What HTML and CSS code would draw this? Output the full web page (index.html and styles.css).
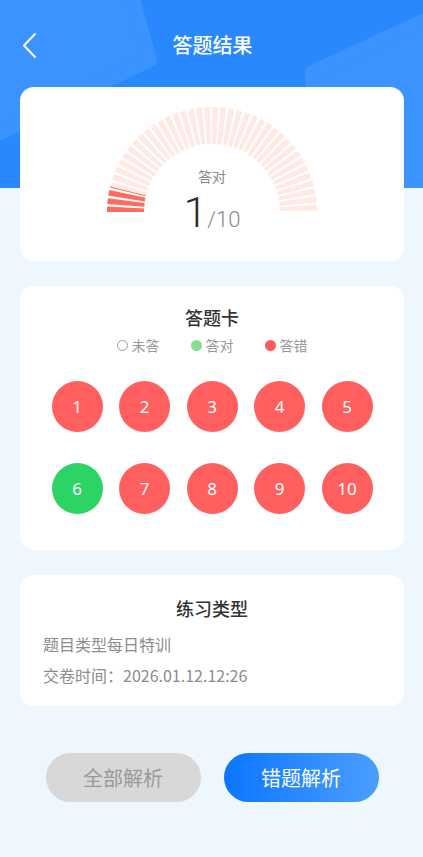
FILE: index.html
```html
<!DOCTYPE html>
<html lang="zh-CN">
    <head>
        <meta charset="utf-8">
        <title>答题结果</title>
        <link rel="stylesheet" href="styles.css">
    </head>
    <body>
        <div class="page">
            <!-- blue band behind the top of the page -->
            <svg class="band" width="423" height="188" viewBox="0 0 423 188">
                <rect width="423" height="188" fill="#2a88ff"/>
                <polygon points="122,-40 150,60 -55,160 -200,-40" fill="#3a93ff" stroke="#3a93ff" stroke-width="14" stroke-linejoin="round"/>
                <polygon points="312,72 460,4 460,200 318,200" fill="#3a93ff" stroke="#3a93ff" stroke-width="14" stroke-linejoin="round"/>
            </svg>

            <header class="nav">
                <svg class="back" width="16" height="26" viewBox="0 0 16 26">
                    <path d="M13 2 L2 13.5 L13 25" fill="none" stroke="#fff" stroke-width="2" stroke-linecap="round" stroke-linejoin="round"/>
                </svg>
                <h1 class="nav-title">答题结果</h1>
                <span></span>
            </header>

            <section class="card score">
                <div class="gauge">
                    <svg width="220" height="120" viewBox="0 0 220 120">
                        <path d="M23.5 106 A86.5 86.5 0 0 1 196.5 106" fill="none" stroke="#fee9e3" stroke-width="37" stroke-dasharray="4.7 2.1"/>
                        <path d="M23.5 106 A86.5 86.5 0 0 1 196.5 106" fill="none" stroke="#ff6b5e" stroke-width="37" stroke-dasharray="4.7 2.1 4.7 2.1 4.7 2.1 0.8 1000"/>
                    </svg>
                    <div class="gauge-label">答对</div>
                    <div class="gauge-value"><span class="got">1</span><span class="total">/10</span></div>
                </div>
            </section>

            <section class="card sheet">
                <h2 class="card-title">答题卡</h2>
                <div class="legend">
                    <span class="legend-item"><i class="dot dot-empty"></i>未答</span>
                    <span class="legend-item"><i class="dot dot-right"></i>答对</span>
                    <span class="legend-item"><i class="dot dot-wrong"></i>答错</span>
                </div>
                <div class="answers">
                    <span class="ball wrong">1</span>
                    <span class="ball wrong">2</span>
                    <span class="ball wrong">3</span>
                    <span class="ball wrong">4</span>
                    <span class="ball wrong">5</span>
                    <span class="ball right">6</span>
                    <span class="ball wrong">7</span>
                    <span class="ball wrong">8</span>
                    <span class="ball wrong">9</span>
                    <span class="ball wrong">10</span>
                </div>
            </section>

            <section class="card info">
                <h2 class="card-title">练习类型</h2>
                <p class="info-line">题目类型每日特训</p>
                <p class="info-line">交卷时间：2026.01.12.12:26</p>
            </section>

            <div class="actions">
                <button class="btn btn-all">全部解析</button>
                <button class="btn btn-wrong">错题解析</button>
            </div>
        </div>
    </body>
</html>
```

FILE: styles.css
```css
body{
    margin: 0;
    font-family: "Noto Sans CJK SC", "Noto Sans", sans-serif;
    background-color: #eef6fe;
}

.page{
    position: relative;
    width: 423px;
    min-height: 857px;
    box-sizing: border-box;
    padding: 0 19px 0 20px;
    background-color: #eef6fe;
    overflow: hidden;
}
.band{
    position: absolute;
    top: 0;
    left: 0;
}

.nav{
    position: relative;
    display: grid;
    grid-template-columns: 40px 1fr 40px;
    align-items: center;
    height: 87px;
    margin: 0 -19px 0 -20px;
    padding: 0 20px 0 22px;
    box-sizing: border-box;
}
.back{
    display: block;
    margin-top: 2px;
}
.nav-title{
    margin: 0;
    text-align: center;
    color: #fff;
    font-size: 20px;
    font-weight: 500;
    line-height: 24px;
    margin-top: 2px;
}

.card{
    position: relative;
    background-color: #fff;
    border-radius: 14px;
    box-sizing: border-box;
    margin-bottom: 25px;
}

.score{
    height: 174px;
    padding-top: 19px;
}
.gauge{
    position: relative;
    width: 220px;
    height: 120px;
    margin: 0 auto;
}
.gauge svg{
    display: block;
}
.gauge-label{
    position: absolute;
    top: 60px;
    left: 0;
    right: 0;
    text-align: center;
    color: #8a8a8a;
    font-size: 14px;
    line-height: 20px;
}
.gauge-value{
    position: absolute;
    top: 81px;
    left: 0;
    right: 0;
    text-align: center;
    font-family: Roboto, "Noto Sans", sans-serif;
    line-height: 50px;
}
.got{
    color: #2b2b2b;
    font-size: 43px;
    font-weight: 300;
}
.total{
    color: #8a8a8a;
    font-size: 22px;
    font-weight: 300;
}

.card-title{
    margin: 0;
    text-align: center;
    color: #333;
    font-size: 18px;
    font-weight: 500;
    line-height: 22px;
}

.sheet{
    height: 264px;
    padding-top: 20px;
}
.legend{
    display: flex;
    justify-content: center;
    gap: 31px;
    margin-top: 8px;
    color: #999;
    font-size: 14px;
    line-height: 18px;
}
.legend-item{
    display: flex;
    align-items: center;
    gap: 4px;
}
.dot{
    display: inline-block;
    width: 11px;
    height: 11px;
    border-radius: 50%;
    box-sizing: border-box;
}
.dot-empty{
    border: 1.5px solid #9a9a9a;
}
.dot-right{
    background-color: #86de8c;
}
.dot-wrong{
    background-color: #ff5a5a;
}

.answers{
    display: grid;
    grid-template-columns: repeat(5, 51px);
    column-gap: 16.5px;
    row-gap: 31px;
    justify-content: center;
    margin-top: 27px;
}
.ball{
    display: flex;
    align-items: center;
    justify-content: center;
    width: 51px;
    height: 51px;
    border-radius: 50%;
    color: #fff;
    font-family: "Noto Sans", Roboto, sans-serif;
    font-size: 17px;
}
.wrong{
    background-color: #ff5f5f;
}
.right{
    background-color: #2bd465;
}

.info{
    height: 131px;
    padding: 22px 23px 0 23px;
}
.info-line{
    margin: 0;
    color: #8c8c8c;
    font-size: 16px;
    line-height: 20px;
}
.info-line:first-of-type{
    margin-top: 15px;
}
.info-line + .info-line{
    margin-top: 11px;
}

.actions{
    display: flex;
    justify-content: center;
    gap: 23px;
    margin-top: 47px;
}
.btn{
    width: 155px;
    height: 49px;
    border: none;
    border-radius: 25px;
    font-family: "Noto Sans CJK SC", sans-serif;
    font-size: 20px;
    cursor: pointer;
}
.btn-all{
    background-color: #d8d8d8;
    color: #9a9a9a;
}
.btn-wrong{
    background: linear-gradient(to right, #0c76ff, #4b9eff);
    color: #fff;
}
```
